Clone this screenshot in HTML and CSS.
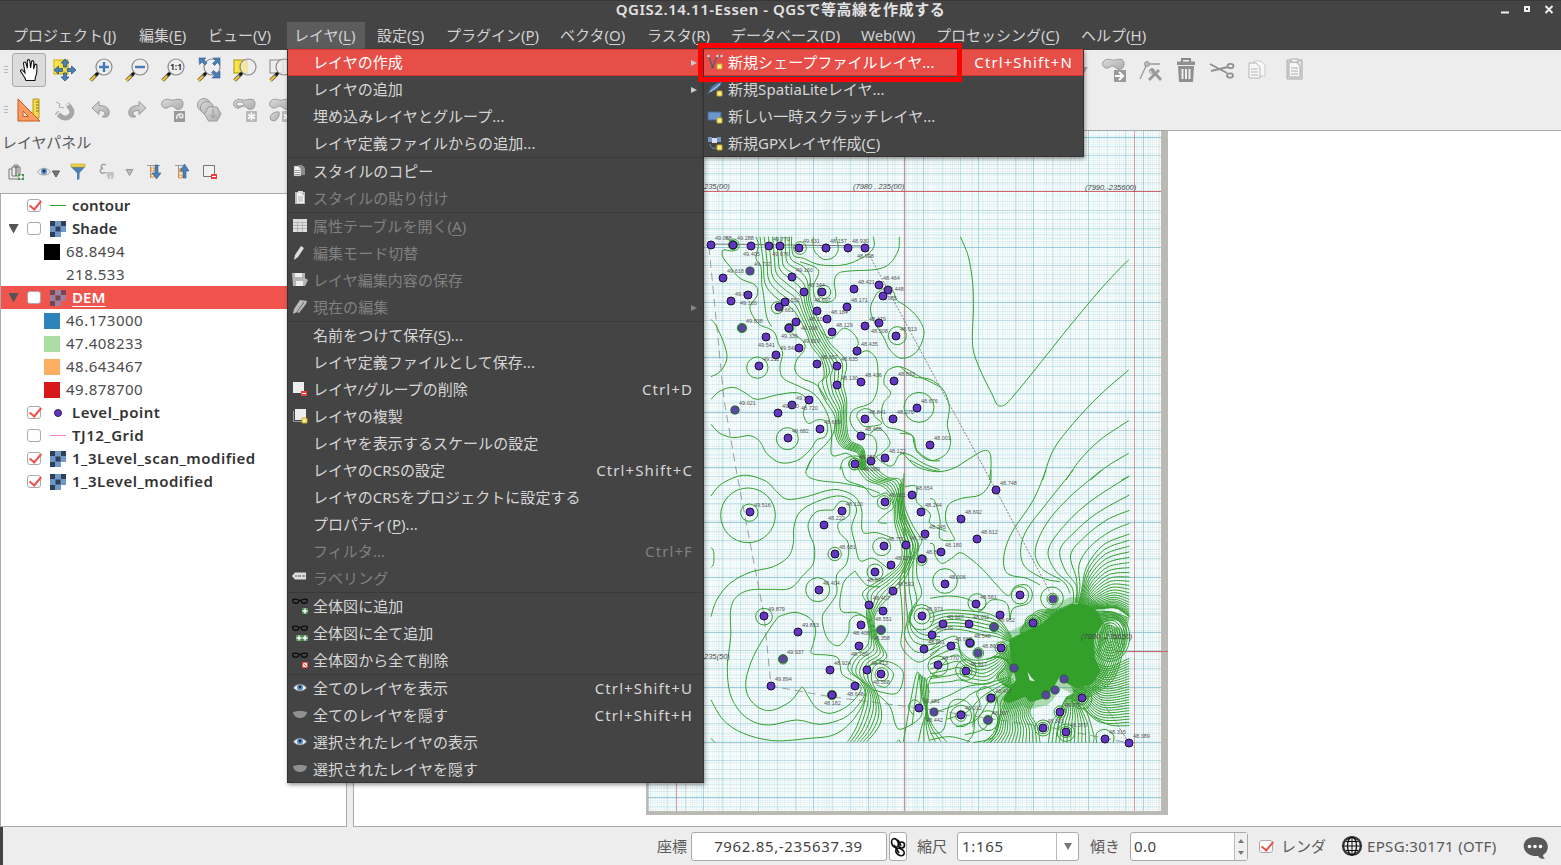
FILE: index.html
```html
<!DOCTYPE html>
<html lang="ja">
<head>
<meta charset="utf-8">
<title>QGIS2.14.11-Essen - QGSで等高線を作成する</title>
<link rel="stylesheet" href="styles.css">
</head>
<body>
<svg class="sprite" width="0" height="0">
  <defs>
    <linearGradient id="gy" x1="0" x2="1"><stop offset="0" stop-color="#fdea50"/><stop offset="1" stop-color="#e8cf30"/></linearGradient>
    <linearGradient id="gg" x1="0" x2="1" y2="1"><stop offset="0" stop-color="#ddd"/><stop offset="1" stop-color="#aaa"/></linearGradient>
  </defs>
  <symbol id="lens" viewBox="0 0 24 24"><path d="M1.5 22.5 8 16" stroke="#555" stroke-width="3.6"/><path d="M1.5 22.5 6 18" stroke="#fcc42e" stroke-width="2.2"/><path d="M7 17l2.5-2.5" stroke="#111" stroke-width="3"/><circle cx="15" cy="9" r="8" fill="#eee" fill-opacity=".75" stroke="#888" stroke-width="1.2"/></symbol>
  <symbol id="hand" viewBox="0 0 24 24"><path d="M9 22.500C8 19 5 16 3.500 13c0-1.800 2-1.600 3 .2l1.500 1.600L6.500 5.500c0-1.800 2-2 2.500-.2l1.400 5L10.300 3c.1-1.800 2.300-1.800 2.500 0l.8 7 .9-6.200c.3-1.700 2.300-1.400 2.300.3l-.2 6.900 1.200-4c.6-1.500 2.300-1 2.100.7C20 12 20 16 18.500 19l-.5 3.500z" fill="#fff" stroke="#111" stroke-width="1.100"/></symbol>
  <symbol id="pan" viewBox="0 0 24 24"><rect x="1" y="2" width="14" height="14" fill="url(#gy)" stroke="#c9a800"/><path d="M12 1l4 4h-2.500v4h-3V5H8zM12 23l4-4h-2.500v-4h-3v4H8zM1 12l4.500-4v2.500h4v3h-4V16zM23 12l-4.500-4v2.500h-4v3h4V16z" fill="#4c7fb5" stroke="#2e5a8c" stroke-width=".8"/></symbol>
  <symbol id="ruler" viewBox="0 0 24 24"><path d="M16 1h6v19h-6z" fill="#f3d94c" stroke="#b59b10"/><path d="M19 4h3M19 7h3M19 10h3M19 13h3" stroke="#8a7410"/><path d="M1 1v22h22zM6 13l5.500 5.500H6z" fill="#ff9a62" fill-rule="evenodd" stroke="#c75a20"/></symbol>
  <symbol id="magnet" viewBox="0 0 24 24"><path d="M3.500 14.500l4.500 4c6 5 15-3 9-9l-3-3.500" fill="none" stroke="#a6a6a6" stroke-width="5"/><path d="M3 18l4-4.500M12 9l4.500-3.500" stroke="#eee" stroke-width="1.500"/><path d="M3 4l4 2-1 3 5 1" stroke="#aaa" fill="none"/></symbol>
  <symbol id="undo" viewBox="0 0 24 24"><path d="M3 10l7-6.500v4c7 0 11 2.500 10 9-1 3-5 3-7 2 4-1 5-6-3-6v4z" fill="url(#gg)" stroke="#999"/></symbol>
  <symbol id="blob" viewBox="0 0 24 24"><path d="M2 3c4-4 7 0 11-1 4-1 9-2 9 4s-6 7-9 3c-3-3-6 2-9 1S-1 6 2 3z" fill="url(#gg)" stroke="#999"/></symbol>
  <symbol id="star" viewBox="0 0 24 24"><rect x="13" y="13" width="11" height="11" rx="1" fill="#b8b8b8"/><path d="M18.500 14.500v8M15 16.500l7 4M22 16.500l-7 4" stroke="#fff" stroke-width="1.500"/></symbol>
  <symbol id="eye" viewBox="0 0 16 16"><path d="M1.500 8c3-5 10-5 13 0-3 4-10 4-13 0z" fill="#e8eef4" stroke="#777" stroke-width=".6"/><circle cx="8" cy="7.500" r="3" fill="#5d8dc4"/><circle cx="8" cy="7" r="1.400" fill="#1b3556"/></symbol>
  <symbol id="lid" viewBox="0 0 16 16"><path d="M1 5c4-1.500 10-1.500 14 0-1 8-13 8-14 0z" fill="#909090"/></symbol>
  <symbol id="raster" viewBox="0 0 16 16"><path fill="#7199c8" d="M0 0h16v11H11v5H5V0z"/><path d="M0 5h5v6H0z" fill="#6d97c8"/><path fill="#2e3f58" d="M0 0h5v5H0zM11 0h5v5h-5zM5.500 5.500h5v5h-5zM0 11h5v5H0z"/></symbol>
  <symbol id="page" viewBox="0 0 16 16"><path d="M6 2h4l3 3v7H6z" fill="#8d8d8d"/><path d="M2 3h4.500L9 6v7H2z" fill="#f2f2f2" stroke="#777" stroke-width=".5"/><path d="M3 7.500h5M3 9.500h5M3 11.500h5" stroke="#999"/></symbol>
  <symbol id="clip" viewBox="0 0 16 16"><path d="M3 2h10v12H3z" fill="#bbb"/><path d="M5 3h4l3 3v7H5z" fill="#f5f5f5"/><path d="M6 1h5v2H6z" fill="#ddd"/><path d="M6 7h5M6 9h5M6 11h5" stroke="#999" stroke-width=".8"/></symbol>
  <symbol id="table" viewBox="0 0 16 16"><path d="M1 1h14v13H1z" fill="#ddd"/><path d="M1 4.500h14M1 7.500h14M1 10.500h14M5.500 4v10M10.500 4v10" stroke="#aaa" stroke-width=".8"/></symbol>
  <symbol id="pencil" viewBox="0 0 16 16"><path d="M2 15l1-5 6-9 3 2-6 9z" fill="#ddd"/></symbol>
  <symbol id="pencils" viewBox="0 0 16 16"><path d="M1 15l1-5 6-9 7 1-1 3-7 9-2-1z" fill="#bbb"/><path d="M5 13l7-10" stroke="#666"/></symbol>
  <symbol id="save" viewBox="0 0 16 16"><path d="M0 1h13v5l3 2-3 6H1z" fill="#b5b5b5"/><path d="M3 1h7v4H3zM4 9h7v5H4z" fill="#eee"/></symbol>
  <symbol id="sq" viewBox="0 0 16 16"><path d="M1 1h11v11H1z" fill="#eee"/></symbol>
  <symbol id="minus" viewBox="0 0 16 16"><rect x="9" y="10" width="6" height="5" fill="#ef3b3b"/><path d="M10 12.500h4" stroke="#fff"/></symbol>
  <symbol id="new" viewBox="0 0 16 16"><rect x="10" y="10" width="5" height="5" rx=".5" fill="#f7ec8e" stroke="#c9a820"/></symbol>
  <symbol id="tag" viewBox="0 0 16 16"><path d="M0 6l3-3.500h11v7H3z" fill="#ddd"/><path d="M3 6h2M6 6h3M10 6h3" stroke="#999" stroke-width="1.800"/></symbol>
  <symbol id="glasses" viewBox="0 0 16 16"><path d="M7 2.500C5 .8 2 .8.500 2 1 6.500 6.500 6.500 7 2.500c.7-.5 1.300-.5 2 0C11 .8 14 .8 15.500 2 15 6.500 9.500 6.500 9 2.500" fill="none" stroke="#0a0a0a" stroke-width="1.200"/></symbol>
  <symbol id="plus" viewBox="0 0 16 16"><rect x="10" y="10" width="6" height="6" fill="#4f8f52"/><path d="M13 10.500v5M10.500 13h5" stroke="#fff" stroke-width="1.500"/></symbol>
</svg>

<header class="titlebar"><span class="title">QGIS2.14.11-Essen - QGSで等高線を作成する</span>
  <svg class="winbtns" width="56" height="16"><path d="M5 11.500h8" stroke="#eee" stroke-width="2"/><rect x="29" y="6" width="4" height="4" fill="none" stroke="#eee" stroke-width="2"/><path d="M49.500 5l7 7M56.500 5l-7 7" stroke="#eee" stroke-width="2"/></svg>
</header>
<nav class="menubar">
  <span>プロジェクト(<u>J</u>)</span><span>編集(<u>E</u>)</span><span>ビュー(<u>V</u>)</span><span class="open">レイヤ(<u>L</u>)</span><span>設定(<u>S</u>)</span><span>プラグイン(<u>P</u>)</span><span>ベクタ(<u>O</u>)</span><span>ラスタ(<u>R</u>)</span><span>データベース(D)</span><span>Web(W)</span><span>プロセッシング(<u>C</u>)</span><span>ヘルプ(<u>H</u>)</span>
</nav>

<div class="toolbars">
  <div class="toolbar">
    <i class="grip"></i>
    <b class="tool on"><svg><use href="#hand"/></svg></b>
    <b class="tool"><svg><use href="#pan"/></svg></b>
    <b class="tool"><svg viewBox="0 0 24 24"><use href="#lens"/><path d="M15 4v10M10 9h10" stroke="#447bb8" stroke-width="2.400"/></svg></b>
    <b class="tool"><svg viewBox="0 0 24 24"><use href="#lens"/><path d="M10 9h10" stroke="#447bb8" stroke-width="2.400"/></svg></b>
    <b class="tool"><svg viewBox="0 0 24 24"><use href="#lens"/><text x="15" y="12" class="ratio">1:1</text></svg></b>
    <b class="tool"><svg viewBox="0 0 24 24"><use href="#lens"/><path d="M2 0h7L7 2l3 3-2 2-3-3-2.500 2.500zM23 0v7l-2.500-2.500L17.500 7.500l-2-2 3-3L16 0zM23 20h-8l2.500-2.500L14.500 14.500l2-2L20 15.500l3-2.500z" fill="#4c7fb5" stroke="#2e5a8c" stroke-width=".6"/></svg></b>
    <b class="tool"><svg viewBox="0 0 24 24"><rect x="1" y="2" width="13" height="13" fill="url(#gy)" stroke="#a98f10"/><use href="#lens"/><path d="M9 4.500c3-3 6-1 6 10-5 1-9-5-6-10z" fill="#f3e89a" opacity=".8"/></svg></b>
    <b class="tool"><svg viewBox="0 0 24 24"><rect x="1" y="2" width="13" height="13" fill="#eee" stroke="#888"/><use href="#lens"/></svg></b>
    <span class="spring"></span>
    <i class="drop"></i>
    <b class="tool"><svg viewBox="0 0 24 24"><use href="#blob"/><rect x="12" y="12" width="12" height="12" fill="#999"/><path d="M13 18h7M17 14l4 4-4 4" stroke="#fff" stroke-width="2" fill="none"/></svg></b>
    <b class="tool"><svg viewBox="0 0 24 24" fill="none" stroke="#999"><circle cx="9" cy="6" r="2.500" fill="#bbb"/><path d="M8 8 2 21M11 6h11" stroke-width="1.300"/><path d="M13 11l10 11M21 12l-10 10" stroke-width="2.800"/><circle cx="14" cy="13" r="2.500"/></svg></b>
    <b class="tool"><svg viewBox="0 0 24 24"><path d="M8 4V1h8v3" fill="none" stroke="#8a8a8a" stroke-width="2"/><path d="M3 3.500h18v3.500H3zM4 8h16l-1 16H5z" fill="#8f8f8f"/><path d="M8.500 11v10M12 11v10M15.500 11v10" stroke="#eee" stroke-width="2"/></svg></b>
    <b class="tool"><svg viewBox="0 0 24 24" fill="none" stroke="#909090" stroke-width="1.800"><path d="M0 6l17 9M1 13l17-4"/><ellipse cx="20.500" cy="8" rx="3" ry="2.200"/><ellipse cx="20" cy="17.500" rx="3" ry="2.200"/></svg></b>
    <b class="tool pale"><svg viewBox="0 0 24 24" fill="#f7f7f7" stroke="#b5b5b5"><path d="M8 3h7l4 4v11H8z" stroke="#ccc"/><path d="M3 5h7l4 4v11H3z"/><path d="M5 11h7M5 14h7M5 17h7"/></svg></b>
    <b class="tool pale"><svg viewBox="0 0 24 24" fill="#f7f7f7" stroke="#aaa"><path d="M5 2h15v19H5z" fill="#ddd"/><path d="M7 4h7l4 4v11H7z"/><path d="M9 10h7M9 13h7M9 16h7"/><path d="M9 1h7v3H9z"/></svg></b>
  </div>
  <div class="toolbar">
    <i class="grip"></i>
    <b class="tool"><svg><use href="#ruler"/></svg></b>
    <b class="tool"><svg><use href="#magnet"/></svg></b>
    <b class="tool"><svg><use href="#undo"/></svg></b>
    <b class="tool flip"><svg><use href="#undo"/></svg></b>
    <b class="tool"><svg viewBox="0 0 24 24"><use href="#blob"/><rect x="13" y="13" width="11" height="11" fill="#999"/><path d="M16 21c-2-5 6-7 6-3 0 3-5 2-3-1" stroke="#eee" stroke-width="1.500" fill="none"/></svg></b>
    <b class="tool"><svg viewBox="0 0 24 24" fill="url(#gg)" stroke="#999"><circle cx="7" cy="7" r="6.500"/><circle cx="10" cy="10" r="6.500"/><path d="M11.500 9h8.500l4 7-4 7h-8.500l-4-7z"/><path d="M16 11v8M13.500 17l2.500 3 2.500-3" fill="none"/></svg></b>
    <b class="tool"><svg viewBox="0 0 24 24"><use href="#blob"/><ellipse cx="7" cy="6" rx="4" ry="2.200" fill="#eee" stroke="#999"/><use href="#star"/></svg></b>
    <b class="tool"><svg viewBox="0 0 24 24"><use href="#blob"/><path d="M2 22c-3-4 3-9 8-8 1 5-3 11-8 8z" fill="url(#gg)" stroke="#999"/><use href="#star"/></svg></b>
  </div>
</div>

<main class="work">
  <aside class="panel">
    <h2>レイヤパネル</h2>
    <div class="ptools">
      <svg viewBox="0 0 16 16"><path d="M4 5H1v10h9M4 3h8v9H4zM6 3V1h4v9" fill="none" stroke="#777"/><path d="M8 2v10" stroke="#444"/><use href="#plus"/></svg>
      <svg class="w24" viewBox="0 0 24 16"><use href="#eye" width="16" height="16"/><path d="M16.500 7h7l-3.500 6z" fill="#777" stroke="#555"/></svg>
      <svg viewBox="0 0 16 16"><path d="M1 3h14L9.500 9v6L7 16V9z" fill="#4c7fb5"/><path d="M1 0h14v3H1z" fill="#ecd64e" stroke="#b9a020" stroke-width=".6"/></svg>
      <svg class="e" viewBox="0 0 16 16"><path d="M7 1C3-1 0 3 4 4.500-1 5 1 11 7 8.500" fill="none" stroke="#999" stroke-width="1.300"/><path d="M7 8h8v3l-1 4h-2v-3h-1v3H9l-1-3z" fill="#c4c4c4"/></svg>
      <svg class="w9" viewBox="0 0 9 16"><path d="M1 5.500h7L4.500 11.500z" fill="#bbb" stroke="#999"/></svg>
      <svg viewBox="0 0 16 16"><path d="M1 1.500h13M4.500 2v12M4 5h4M4 12h4" stroke="#999" fill="none"/><path d="M5 4h3v3H5zM5 10h3v3H5z" fill="#fff" stroke="#f28c1c"/><path d="M9 1h3v8h3l-4.500 6L6 9h3z" fill="#4c7fb5" stroke="#2e5a8c" stroke-width=".6"/></svg>
      <svg viewBox="0 0 16 16"><path d="M1 1.500h8M4.500 2v12M4 5h4M4 12h4" stroke="#999" fill="none"/><path d="M5 5h3v3H5zM5 11h3v3H5z" fill="#fff" stroke="#f28c1c"/><path d="M9 14h3V7h3l-4.500-7L6 7h3z" fill="#4c7fb5" stroke="#2e5a8c" stroke-width=".6"/></svg>
      <svg viewBox="0 0 16 16"><path d="M1.500 1.500h11v11h-11z" fill="#f2f2f2" stroke="#777"/><use href="#minus"/></svg>
    </div>
    <div class="tree">
      <div class="row"><i class="tw"></i><i class="cb ck"></i><i class="line green"></i><b>contour</b></div>
      <div class="row"><i class="tw tri"></i><i class="cb"></i><svg class="ri"><use href="#raster"/></svg><b>Shade</b></div>
      <div class="row leg"><i class="sw black"></i>68.8494</div>
      <div class="row leg"><i class="sw"></i>218.533</div>
      <div class="row sel"><i class="tw tri"></i><i class="cb"></i><svg class="ri"><use href="#raster"/></svg><b><u>DEM</u></b></div>
      <div class="row leg"><i class="sw blue"></i>46.173000</div>
      <div class="row leg"><i class="sw mint"></i>47.408233</div>
      <div class="row leg"><i class="sw orange"></i>48.643467</div>
      <div class="row leg"><i class="sw red"></i>49.878700</div>
      <div class="row wide"><i class="tw"></i><i class="cb ck"></i><i class="dot"></i><b>Level_point</b></div>
      <div class="row wide"><i class="tw"></i><i class="cb"></i><i class="line pink"></i><b>TJ12_Grid</b></div>
      <div class="row wide"><i class="tw"></i><i class="cb ck"></i><svg class="ri"><use href="#raster"/></svg><b>1_3Level_scan_modified</b></div>
      <div class="row wide"><i class="tw"></i><i class="cb ck"></i><svg class="ri"><use href="#raster"/></svg><b>1_3Level_modified</b></div>
    </div>
  </aside>
  <section class="canvas"><svg id="map" viewBox="354 131 1207 695" width="1207" height="695"></svg></section>
</main>

<footer class="status">
  <span class="lbl">座標</span><span class="field coord">7962.85,-235637.39</span>
  <span class="field tog"><svg viewBox="0 0 16 20"><g fill="none" stroke="#111" stroke-width="1.700"><ellipse cx="5" cy="6" rx="3.200" ry="4.500" transform="rotate(-20 5 6)"/><circle cx="11.500" cy="8" r="3"/><ellipse cx="10" cy="15" rx="4.500" ry="3.200" transform="rotate(30 10 15)"/><path d="M4 8l5 8M8 3l3 6"/></g></svg></span>
  <span class="lbl scale">縮尺</span><span class="field combo">1:165<i></i></span>
  <span class="lbl rot">傾き</span><span class="field spin">0.0<i></i></span>
  <i class="cb ck"></i><span class="lbl ren">レンダ</span>
  <svg class="globe" viewBox="0 0 22 22" fill="none" stroke="#111"><circle cx="11" cy="11" r="8.900" stroke-width="2.400" stroke="#333"/><path d="M2 11h18M5 6.500h12M5 15.500h12M11 2v18" stroke-width="1"/><ellipse cx="11" cy="11" rx="4.500" ry="9" stroke-width="1.300"/></svg>
  <span class="lbl epsg">EPSG:30171 (OTF)</span>
  <svg class="bubble" viewBox="0 0 26 24"><path d="M13 1c16 0 15 15 8 18 0 2 1 3 2 4-4 0-6-1-7-3C-2 21-3 1 13 1z" fill="#595959"/><circle cx="7.500" cy="10.500" r="1.800" fill="#fff"/><circle cx="13" cy="10.500" r="1.800" fill="#fff"/><circle cx="18.500" cy="10.500" r="1.800" fill="#fff"/></svg>
</footer>

<div class="menu main">
  <div class="mi hot"><i></i>レイヤの作成<em class="arr"></em></div>
  <div class="mi"><i></i>レイヤの追加<em class="arr"></em></div>
  <div class="mi"><i></i>埋め込みレイヤとグループ...</div>
  <div class="mi"><i></i>レイヤ定義ファイルからの追加...</div>
  <hr>
  <div class="mi"><svg><use href="#page"/></svg>スタイルのコピー</div>
  <div class="mi off"><svg><use href="#clip"/></svg>スタイルの貼り付け</div>
  <hr>
  <div class="mi off"><svg><use href="#table"/></svg>属性テーブルを開く(<u>A</u>)</div>
  <div class="mi off"><svg><use href="#pencil"/></svg>編集モード切替</div>
  <div class="mi off"><svg><use href="#save"/></svg>レイヤ編集内容の保存</div>
  <div class="mi off"><svg><use href="#pencils"/></svg>現在の編集<em class="arr"></em></div>
  <hr>
  <div class="mi"><i></i>名前をつけて保存(<u>S</u>)...</div>
  <div class="mi"><i></i>レイヤ定義ファイルとして保存...</div>
  <div class="mi"><svg viewBox="0 0 16 16"><use href="#sq"/><use href="#minus"/></svg>レイヤ/グループの削除<em>Ctrl+D</em></div>
  <div class="mi"><svg viewBox="0 0 16 16"><path d="M1.500 3v10.500h10" fill="none" stroke="#999"/><path d="M3 1h11v11H3z" fill="#eee"/><use href="#new"/></svg>レイヤの複製</div>
  <div class="mi"><i></i>レイヤを表示するスケールの設定</div>
  <div class="mi"><i></i>レイヤのCRSの設定<em>Ctrl+Shift+C</em></div>
  <div class="mi"><i></i>レイヤのCRSをプロジェクトに設定する</div>
  <div class="mi"><i></i>プロパティ(<u>P</u>)...</div>
  <div class="mi off"><i></i>フィルタ...<em>Ctrl+F</em></div>
  <div class="mi off"><svg><use href="#tag"/></svg>ラベリング</div>
  <hr>
  <div class="mi"><svg viewBox="0 0 16 16"><use href="#glasses"/><use href="#plus"/></svg>全体図に追加</div>
  <div class="mi"><svg viewBox="0 0 16 16"><use href="#glasses"/><use href="#plus"/><use href="#plus" x="-6"/></svg>全体図に全て追加</div>
  <div class="mi"><svg viewBox="0 0 16 16"><use href="#glasses"/><rect x="10" y="10" width="6" height="6" fill="#e44"/><circle cx="13" cy="13" r="1.800" fill="none" stroke="#fff"/><path d="M11.500 14.500l3-3" stroke="#fff"/></svg>全体図から全て削除</div>
  <hr>
  <div class="mi"><svg><use href="#eye"/></svg>全てのレイヤを表示<em>Ctrl+Shift+U</em></div>
  <div class="mi"><svg><use href="#lid"/></svg>全てのレイヤを隠す<em>Ctrl+Shift+H</em></div>
  <div class="mi"><svg><use href="#eye"/></svg>選択されたレイヤの表示</div>
  <div class="mi"><svg><use href="#lid"/></svg>選択されたレイヤを隠す</div>
</div>
<div class="menu sub">
  <div class="mi hot"><svg viewBox="0 0 16 16"><path d="M1.500 2l4 11 5-11h4" fill="none" stroke="#556070" stroke-width="1.300"/><circle cx="1.500" cy="2" r="1.200" fill="#dde"/><circle cx="5.500" cy="13" r="1.300" fill="#557"/><circle cx="10.500" cy="2" r="1.200" fill="#dde"/><circle cx="14.500" cy="2" r="1.200" fill="#dde"/><use href="#new"/></svg>新規シェープファイルレイヤ...<em>Ctrl+Shift+N</em></div>
  <div class="mi"><svg viewBox="0 0 16 16"><path d="M0 14C4 5 8 2 15 1 13 7 8 10 3 11z" fill="#4c7fb5"/><path d="M3 11L13 3" stroke="#dde"/><use href="#new"/></svg>新規SpatiaLiteレイヤ...</div>
  <div class="mi"><svg viewBox="0 0 16 16"><path d="M1 4h13v8H1z" fill="#6d97c8" stroke="#41699a"/><use href="#new"/></svg>新しい一時スクラッチレイヤ...</div>
  <div class="mi"><svg viewBox="0 0 16 16"><path d="M1 2h4v5H1zM10 2h4v5h-4z" fill="#6d97c8"/><path d="M5 3h5v5H5z" fill="#dde"/><path d="M3 9c1 4 3 5 6 4" fill="none" stroke="#6d97c8"/><use href="#new"/></svg>新規GPXレイヤ作成(<u>C</u>)</div>
</div>
<div class="marker"></div>
<script src="map.js"></script>
</body>
</html>
```
FILE: styles.css
```css
* { box-sizing: border-box; }
body { margin: 0; width: 1561px; height: 865px; overflow: hidden; position: relative; display: flex; flex-direction: column; background: #ededed; color: #4c4c4c; font: 400 15px/23px "Noto Sans", "Noto Sans CJK JP", sans-serif; }
i, em { font-style: normal; }
b { font-weight: normal; }
u { text-decoration: underline; text-underline-offset: 3px; text-decoration-thickness: 1px; }
.sprite { position: absolute; }

.titlebar { height: 22px; background: #444; border-top: 1px solid #383838; display: flex; position: relative; justify-content: center; color: #e2e2e2; font-weight: 600; font-size: 15px; line-height: 17px; white-space: pre; }
.title { letter-spacing: .53px; }
.winbtns { position: absolute; right: 9px; top: 0; overflow: visible; }
.menubar { height: 28px; background: #444; padding-left: 5px; display: grid; grid-template-columns: 126px 69px 87px 82px 69px 114px 87px 84px 130px 75px 145px 90px; color: #d2d2d2; line-height: 27px; white-space: nowrap; }
.menubar span { padding-left: 8px; }
.menubar .open { background: #5c5c5c; width: 78px; height: 27px; padding-left: 7px; }

.toolbars { height: 80px; }
.toolbar { height: 40px; display: flex; align-items: center; padding-left: 4px; }
.grip { width: 4px; height: 8px; margin-right: 3px; background: repeating-linear-gradient(#bbb 0 1px, transparent 1px 3px); }
.tool { width: 36px; height: 34px; display: flex; align-items: center; justify-content: center; flex: none; }
.tool svg { width: 24px; height: 24px; overflow: visible; }
.tool.on { width: 34px; margin: 0 1px; border: 1px solid #aaa; border-radius: 3px; background: #dcdcdc; }
.flip { transform: scaleX(-1); }
.spring { width: 781px; flex: none; }
.drop { border: 4px solid transparent; border-top: 6px solid #aaa; border-bottom: 0; margin-right: 8px; }
.ratio { font: 700 8.500px "Noto Sans", sans-serif; text-anchor: middle; fill: #333; }

.work { height: 697px; display: flex; }
.panel { width: 347px; border-right: 1px solid #aaa; display: flex; flex-direction: column; }
h2 { margin: 0; height: 25px; padding-left: 2px; font-size: 15px; font-weight: 400; line-height: 25px; color: #5a5a5a; }
.ptools { height: 38px; display: flex; align-items: center; padding: 0 0 5px 8px; }
.ptools svg { width: 16px; height: 16px; margin-right: 12px; overflow: visible; }
.ptools .w24 { width: 24px; margin-right: 10px; }
.ptools .e { margin: 0 10px 0 1px; }
.ptools .w9 { width: 9px; margin: 0 12px 0 0; }
.tree { flex: 1; border: 1px solid #aaa; border-right: 0; background: #fff; }
.row { height: 23px; display: flex; align-items: center; letter-spacing: .5px; }
.row b { font-weight: 600; letter-spacing: .1px; color: #333; }
.row.wide b { letter-spacing: .5px; }
.tw { width: 26px; height: 10px; }
.tri { background: linear-gradient(#555, #555) no-repeat 8px 0 / 10px 10px; clip-path: polygon(7px 0, 18px 0, 12.500px 10px); }
.cb { width: 14px; height: 13px; border: 1px solid #aaa; border-radius: 3px; background: #fff; margin-right: 9px; position: relative; }
.ck::after { content: ""; position: absolute; left: 4px; top: -2px; width: 5px; height: 10px; border: solid #ef4f48; border-width: 0 2px 2px 0; transform: rotate(40deg); }
.line { width: 16px; height: 1px; margin-right: 6px; }
.green { background: #33a02c; }
.pink { background: #ee82d6; }
.ri { width: 16px; height: 16px; margin-right: 6px; }
.dot { width: 8px; height: 8px; margin: 0 10px 0 4px; border-radius: 50%; background: #6236c0; border: 1px solid #332255; }
.leg { padding-left: 43px; }
.sw { width: 16px; height: 16px; margin-right: 6px; }
.black { background: #000; } .blue { background: #2b83ba; } .mint { background: #abdda4; } .orange { background: #fdae61; } .red { background: #d7191c; }
.sel { background: #f0544c; }
.row.sel b { color: #fff; }
.sel .ri { opacity: .62; }
.canvas { margin-left: 6px; width: 1208px; height: 697px; background: #fff; border: 1px solid #aaa; border-right: 0; }
.canvas svg { display: block; }
.pt { fill: #6236c0; stroke: #1a1033; stroke-width: 1; }
.ptg { fill: #5b45a2; stroke: #2f5f40; stroke-width: 1.200; }
.ct path, .ct circle, .ct ellipse { fill: none; stroke: #33a02c; vector-effect: non-scaling-stroke; }
.ct .core { fill: #33a02c; stroke: none; }
.ct .fringe { fill: #33a02c; stroke: #33a02c; stroke-width: 14px; stroke-linejoin: round; opacity: .35; }
.hand { font: 5.500px "Liberation Sans", sans-serif; fill: #555; }
.hand2 { font: italic 7.500px "Liberation Sans", sans-serif; fill: #444; }

.status { height: 38px; display: flex; align-items: center; color: #5a5a5a; border-left: 3px solid #444; padding-left: 654px; }
.lbl { white-space: nowrap; width: 34px; }
.field { background: #fff; border: 1px solid #aaa; border-radius: 3px; height: 29px; color: #444; line-height: 27px; position: relative; white-space: nowrap; }
.coord { width: 196px; text-align: center; letter-spacing: .65px; padding-right: 1px; }
.tog { width: 18px; margin: 0 10px 0 2px; }
.tog svg { width: 16px; height: 20px; margin: 4px 0; display: block; }
.scale { width: 40px; }
.combo { width: 122px; padding-left: 4px; letter-spacing: .7px; }
.combo i { position: absolute; right: 0; top: 0; width: 22px; height: 27px; border-left: 1px solid #bbb; }
.combo i::after { content: ""; position: absolute; left: 7px; top: 10px; border: 4px solid transparent; border-top: 7px solid #777; border-bottom: 0; }
.rot { padding-left: 11px; width: 52px; margin-right: -1px; }
.spin { width: 118px; padding-left: 3px; letter-spacing: .4px; }
.spin i { position: absolute; right: 0; top: 0; width: 13px; height: 27px; background: #f0f0f0; border-left: 1px solid #bbb; }
.spin i::before, .spin i::after { content: ""; position: absolute; left: 3px; top: 6px; border: 3px solid transparent; border-bottom: 4px solid #777; border-top: 0; }
.spin i::after { top: 18px; border-top: 4px solid #777; border-bottom: 0; }
.status > .cb { margin: 0 8px 0 11px; }
.ren { width: 60px; }
.globe { width: 22px; height: 22px; margin-right: 4px; }
.epsg { width: 156px; letter-spacing: .35px; }
.bubble { width: 26px; height: 24px; margin-top: 3px; margin-left: -1px; }

.menu { position: absolute; background: #444; border: 1px solid #333; box-shadow: 1px 2px 4px rgba(0,0,0,.4); color: #d6d6d6; }
.main { left: 287px; top: 49px; width: 417px; height: 734px; border-top: 0; }
.sub { left: 703px; top: 49px; width: 381px; height: 108px; border-top: 0; }
.sub .mi { padding-left: 3px; }
.menu hr { margin: 0; border: 0; height: 1px; background: #393939; }
.mi { height: 27px; display: flex; align-items: center; padding: 0 11px 0 4px; line-height: 27px; white-space: pre; letter-spacing: .05px; }
.mi svg, .mi > i { width: 16px; height: 16px; margin: -2px 5px 0 0; flex: none; overflow: visible; }
.mi em { margin-left: auto; margin-right: -1px; letter-spacing: 1.100px; }
.mi .arr { border: 3px solid transparent; border-left: 6px solid #ccc; border-right: 0; margin-right: -5px; }
.menu .off { color: #808080; }
.off .arr { border-left-color: #858585; }
.menu .hot { background: #e84e48; color: #fff; box-shadow: inset 0 1px #d8352f, inset 0 -1px #d8352f; }
.marker { position: absolute; left: 698px; top: 43px; width: 264px; height: 39px; border: 5px solid #f00; }
```
FILE: map.js
```js
const map = document.getElementById('map');
let out = '';
let seed = 7;
const rnd = () => (seed = (seed * 16807) % 2147483647) / 2147483647;

// Scanned sheet of millimetre paper
out += '<rect x="646" y="131" width="522" height="684" fill="#bab9b4"/><rect x="648" y="131" width="513" height="680" fill="#f9ffff"/>';
const vline = (x, c, o) => out += `<rect x="${x}" y="131" width="1" height="680" fill="${c}" opacity="${o}"/>`;
const hline = (y, c, o) => out += `<rect x="648" y="${y}" width="513" height="1" fill="${c}" opacity="${o}"/>`;
const tints = ['#a5ecf4', '#b5c2c0', '#a0dcee', '#e2c9c2'];
for (let k = 0; k < 280; k++) vline(Math.round(648 + k * 1.833), tints[k % 4], (.04 + rnd() * .26).toFixed(2));
for (let k = 0; k < 371; k++) hline(Math.round(131 + k * 1.833), tints[(k + 1) % 4], (.04 + rnd() * .26).toFixed(2));
for (let k = 0; k < 28; k++) vline(Math.round(648.300 + k * 18.330), '#7fbcd0', k % 3 ? .3 : .6);
for (let k = 0; k < 37; k++) if (k !== 3) hline(Math.round(136.700 + k * 18.330), '#7fbcd4', k % 3 ? .35 : .7);
for (let k = 0; k < 74; k++) if (k !== 6) hline(Math.round(137 + k * 9.165), '#8bb', .18);
vline(904, '#c8606c', .7); vline(676, '#c8606c', .6); vline(1134, '#c8606c', .6);
hline(191, '#cc4858', .85);
out += '<rect x="1116" y="651" width="52" height="1" fill="#c66"/>';
out += '<path d="M709 247 724 400 738 480 764 615 771 686 832 697 919 708 1053 728 1129 743" fill="none" stroke="#888" stroke-width=".8" stroke-dasharray="8 5"/>';
out += '<path d="M711 244 865 246" stroke="#555" stroke-width=".8"/><path d="M865 247 940 387 996 490 1053 598M1095 690 1129 743" fill="none" stroke="#666" stroke-width=".8" stroke-dasharray="2 1.500"/>';

const smooth = p => {
  let d = `M${p[0][0]} ${p[0][1]}`;
  for (let i = 0; i < p.length - 1; i++) {
    const a = p[i - 1] || p[i], b = p[i], c = p[i + 1], e = p[i + 2] || c;
    const f = v => v.toFixed(1);
    d += `C${f(b[0] + (c[0] - a[0]) / 6)} ${f(b[1] + (c[1] - a[1]) / 6)} ${f(c[0] - (e[0] - b[0]) / 6)} ${f(c[1] - (e[1] - b[1]) / 6)} ${c[0].toFixed(1)} ${c[1].toFixed(1)}`;
  }
  return `<path d="${d}"/>`;
};
const pts = s => s.trim().split(/\s+/).map(q => q.split(',').map(Number));
const bundle = (a, b, n, pow = 1) => {
  const A = pts(a), B = pts(b);
  for (let k = 0; k < n; k++) {
    const t = 1 - Math.pow(1 - k / (n - 1), pow);
    out += smooth(A.map((p, i) => [p[0] + (B[i][0] - p[0]) * t, p[1] + (B[i][1] - p[1]) * t]));
  }
};
const lines = a => a.forEach(s => out += smooth(pts(s)));
const rings = a => a.forEach(([x, y, r]) => out += `<circle cx="${x}" cy="${y}" r="${r}"/>`);
const tile = (x, y, fn) => { out += `<g class="ct" transform="translate(${x} ${y}) scale(.33333)">`; fn(); out += '</g>'; };

// North-west
tile(700, 170, () => {
  lines([
    '75,200 90,212 100,207 115,215 115,236 95,243 70,240 68,260 90,290 120,325 165,345 172,375 150,410 160,440 180,465 205,475 225,490 235,520 248,550 240,590 250,625 300,650 340,670 365,700 385,740 395,790 396,855 440,850 470,870',
    '168,200 175,225 168,265 183,290 185,340 190,370 200,440 215,470',
    '340,200 342,240 365,265 385,268 405,258 415,235 408,200',
    '520,200 522,230 500,255 450,280 400,287 350,282 310,265 282,258 275,230 275,200',
    '598,200 595,240 570,280 530,298 450,303 415,310 403,335 407,380 385,397 350,390 340,350 355,300 300,275',
    '530,370 512,410 520,450 550,500 570,540 605,565 650,545 672,490 655,445 620,410 590,390 580,365 555,355 530,370',
    '33,448 50,470 75,530 80,570 60,605 33,620',
    '33,688 60,663 100,652 135,668 170,688 230,675 290,668 320,690 310,730 325,760 350,750 375,752 383,775 375,800 350,810 330,840 290,872 240,878 200,850 180,815 150,797 100,803 60,790 33,763',
    '275,490 300,505 315,525 310,545 290,570 285,600 305,625 350,645 380,690',
    '360,480 380,500 400,503 430,475 460,490 475,520 460,545 470,555 500,542 525,560 533,590 533,650 520,690 500,705 460,720 450,750 470,785 520,800 530,840 515,870',
    '470,740 475,725 495,716 515,722 525,740 545,760 520,768 490,768 470,740',
    '720,650 660,620 620,597 590,590 560,605 552,640 572,670 550,700 545,740 560,770 600,780 640,800 650,840 690,870 720,872',
    '320,900 340,860 380,820 400,790 405,760',
    '420,900 430,870 460,858 490,862',
    '510,790 540,775 570,818 545,850 530,862 560,885 580,885 600,853 630,855 670,880 720,900'
  ]);
  bundle('180,200 190,280 195,340 225,380 275,415 300,450 320,490 335,530 365,570 372,620 355,645 375,690 405,740 405,790 425,830 475,852 480,900',
         '268,200 268,240 275,270 310,290 330,320 330,380 345,430 370,480 390,520 430,560 440,590 430,640 440,690 440,760 450,810 490,835 498,900', 8);
  rings([[300,234,19],[378,234,12],[126,474,14],[172,593,32],[262,806,33],[105,720,12],[372,366,20],[592,497,27],[657,712,45],[99,225,14],[150,303,10],[232,413,18],[268,474,14],[464,882,18],[471,543,12],[564,360,10]]);
});

// North-east
tile(900, 150, () => lines([
  '181,260 205,320 218,400 220,480 217,560 222,610 245,670 275,730 290,762 305,768 325,755 380,690 440,615 512,525 600,420 660,355 686,330',
  '686,660 600,735 520,820 460,900 428,990',
  '686,812 600,870 540,930 498,990',
  '686,910 620,950 572,990',
  '686,980 665,990',
  '0,650 40,680 90,688 130,720 148,770 142,825 152,870 140,910 95,932 55,910 42,880 35,855 0,850',
  '0,910 10,912 50,950 110,965 160,955 210,925 250,902 270,910 273,950 268,990'
]));

// South-west
tile(700, 460, () => {
  lines([
    '33,108 60,75 110,50 150,47 200,65 230,95 262,118 320,110 380,92 420,90 465,110 485,150 488,215 530,218 580,235',
    '33,470 50,420 90,370 150,337 220,320 265,290 280,250 282,200 300,155 350,125 410,108 450,118 470,150 455,200 465,250 480,302 520,295 570,330',
    '33,835 45,848',
    '33,720 70,780 130,820 220,842 330,835 400,825 450,790 485,740 500,700',
    '33,262 41,275 41,310 33,322',
    '400,150 350,155 325,190 330,225 343,260 340,310 310,345 270,385 210,388 150,390 110,410 92,450 92,530 82,620 90,700 120,755 160,785 210,795 290,780 360,793 430,775 470,740 495,700 480,665',
    '235,470 285,457 330,475 347,510 340,550 335,580 380,585 415,595 425,640 450,658 480,675 478,700 440,740 390,760 350,745 325,710 308,682 295,695 270,725 220,750 180,745 145,710 138,660 160,590 200,520 235,470',
    '400,150 420,125 445,130 447,165 415,190 420,220 445,250 440,310 410,345 410,400 385,440 367,470 375,520 395,550 420,555 445,520 450,480 480,465 510,490 515,540',
    '332,0 318,40 350,60 430,70 500,85 540,100',
    '465,333 430,370 422,450 470,458 510,480', '465,333 500,375 540,380',
    '560,190 535,185 560,160 580,140 560,100 520,110 490,80 440,60 425,20',
    '630,0 680,25 720,35', '615,80 650,80 650,125 690,160 690,190 740,215',
    '530,700 570,740 585,790 600,808 640,790 665,765 660,730 640,720 625,740 640,765',
    '520,690 590,700 610,640 580,610 530,600', '590,845 597,840 602,848',
    '500,620 540,610 580,640 560,680 530,675'
  ]);
  bundle('470,20 500,60 550,80 580,120 583,180 592,220 605,260 600,310 555,350 490,395 500,430 500,470 508,520 500,560 460,590 445,630 490,670 495,720 470,800 443,845',
         '500,0 560,50 600,60 608,110 614,170 640,220 655,260 632,320 610,365 580,400 540,440 522,480 535,540 560,590 522,620 515,660 535,710 545,770 530,810 500,845', 7);
  bundle('590,100 600,170 615,240 620,300 600,360 605,430 608,500 605,560 650,605 690,590 720,565',
         '612,40 612,130 640,200 665,240 655,270 650,340 665,400 640,440 630,480 660,520 720,530', 5);
  bundle('610,845 650,640 665,710 678,755 665,800 655,845', '740,600 690,660 685,710 682,755 700,800 740,845', 6);
  rings([[144,166,82],[148,158,26],[404,282,20],[353,389,36],[192,470,25],[249,598,14],[396,705,14],[545,260,27],[525,336,24],[552,127,20],[666,468,24],[664,472,38],[665,300,16],[545,643,20],[464,12,17],[543,510,14]]);
});

// South-east, where the survey points bunch together
tile(930, 470, () => {
  const core = 'M238 508 290 482 335 462 372 428 425 402 470 404 505 425 520 460 492 500 494 560 512 605 485 642 440 655 410 640 388 622 372 650 345 685 300 696 285 680 262 690 235 700 218 690 235 660 258 630 242 570z';
  out += `<path class="fringe" d="${core}"/><path class="core" d="${core}"/>`;
  lines([
    '183,0 180,40 150,75 95,85 55,105 47,150 65,190 72,210 30,205 30,150 15,95 0,85',
    '0,220 12,225 15,255 35,280 65,265 90,248 120,265 160,300 200,345 235,377 255,350 290,345 307,370 295,400 250,415 240,450',
    '348,0 310,90 250,180 225,240 222,290 240,315 290,325 330,345',
    '430,0 350,100 290,180 272,240 285,290 340,325 390,335',
    '515,0 420,80 350,160 316,240 335,295 400,335 420,370',
    '598,18 480,95 400,170 355,240 375,300 425,350 430,400',
    '598,75 500,130 430,190 390,240 405,300 440,350 435,400',
    '598,121 530,150 465,200 422,255 440,330 440,400',
    '598,160 540,185 480,230 447,285 450,350 440,400',
    '0,385 60,378 120,390 150,420 185,390 230,400 240,450',
    '380,800 405,690 460,710 490,790 490,818', '598,767 540,765 490,740 440,700',
    '500,818 500,790 525,778 550,795 550,818',
    '110,818 130,790 135,740 150,700 140,670 165,650 195,670 205,720 200,780 180,818',
    '0,810 60,800 120,815', '0,790 40,780 60,700 100,690 130,720 128,770'
  ]);
  bundle('598,192 520,225 470,290 455,360 440,420', '598,440 560,415 520,415 480,420 440,440', 26, 1.9);
  bundle('0,430 50,420 110,422 170,430 210,450 245,500', '0,510 40,480 100,480 160,495 200,500 240,515', 7);
  bundle('0,540 40,510 80,500 90,540 130,570 190,560 240,520', '0,640 60,635 90,630 130,640 180,640 210,610 245,560', 8);
  bundle('0,700 60,675 110,650 170,640 240,620', '130,818 190,800 210,740 215,690 260,640', 6);
  bundle('160,818 190,790 205,750 225,690 250,640', '330,818 322,770 300,730 310,700 330,670', 17);
  bundle('355,818 365,760 390,720 410,680', '478,818 475,770 460,730 430,670', 12);
  bundle('470,560 530,590 598,565', '430,660 500,752 598,757', 25, .95);
  bundle('475,430 540,425 598,445', '500,460 560,450 590,480', 8);
  bundle('270,480 300,440 330,420 375,420 430,400', '270,500 310,480 340,460 385,440 430,440', 9);
  bundle('170,570 200,560 235,580 200,620 230,650', '245,540 245,570 250,600 240,630 260,670', 9);
  bundle('420,640 460,600 500,540 520,460', '440,700 540,640 575,560 590,480', 15);
  for (let k = 0; k < 8; k++) out += `<ellipse cx="540" cy="500" rx="${10 + k * 7}" ry="${18 + k * 8}"/>`;
  rings([[93,738,32],[93,738,16],[45,333,37],[270,376,26],[366,385,34],[368,387,17],[309,459,24],[309,459,16],[141,398,27],[108,600,31],[108,603,18],[24,588,30],[145,549,16],[192,471,14],[182,685,14],[174,752,30],[174,750,14],[339,774,24],[339,774,17],[408,788,26],[408,786,17],[390,726,18],[456,687,30],[456,685,18],[213,534,18],[120,519,14],[252,594,13]]);
  out += '<path style="fill:#e9f8ea;stroke:none" d="M293 605l6 26 16 3-12-12zM358 708l34-18-12 18z"/>';
});

// Survey points, x,y in sheet pixels; * marks one overdrawn by a contour
const P = '711,245 733,245 751,246 769,246 780,246 799,248 826,248 848,248 865,248 723,278 750,271* 792,277 731,301 748,295 804,292 822,292 854,289 879,285 888,290 883,296 779,307 785,302 817,311 847,307 827,319 742,328* 789,328 796,322 766,337 832,332 865,326 879,323 896,336 776,355 799,348 857,351 759,366 817,364 837,366 861,382 837,385 894,381 735,410* 792,405 809,400 778,413 820,429 788,438 865,419 893,419 917,408 861,436 930,445 885,458 871,461 855,464 750,512 842,511 824,525 885,502 912,495 921,512 925,534 906,545 884,546 835,554 922,559 941,552 891,565 875,572 819,590 893,591 869,605 883,611 764,616 798,632 861,625 881,630* 922,616 859,646 783,659* 932,635 924,649 830,670 867,670 881,674 855,686 771,686 832,695 919,708 934,712* 938,665 996,490 961,519 977,539 945,584 1020,595 1053,599* 976,604 1000,615 1033,623 943,624 969,624 994,627* 951,646 970,643 978,653* 1001,648 966,671 1014,668* 1064,679* 1055,690* 1046,695* 1082,698 991,698 1060,712 1043,728 1066,732 1105,739 1129,743 961,715 988,720*'.split(' ');

// Each spot height takes the first free place round its point
const placed = [];
const free = (x, y) => placed.every(([a, b]) => Math.abs(a - x) > 18 || Math.abs(b - y) > 7);
P.forEach(s => {
  const [x, y] = s.replace('*', '').split(',').map(Number);
  const v = ((x < 800 ? 49 : 48) + rnd()).toFixed(3);
  if (x < 1000 || y > 700) {
    const spot = [[4, -5], [-8, 10], [5, 8], [-18, -5], [6, 2], [-23, 2]].map(o => [x + o[0], y + o[1]]).find(q => free(...q));
    if (spot) {
      placed.push(spot);
      out += `<text class="hand" x="${spot[0]}" y="${spot[1]}">${v}</text>`;
    }
  }
  out += `<circle class="${s.includes('*') ? 'ptg' : 'pt'}" cx="${x}" cy="${y}" r="4"/>`;
});
out += '<text class="hand2" x="704" y="189">235(00)</text><text class="hand2" x="853" y="189">(7980 , 235(00)</text><text class="hand2" x="1085" y="190">(7990,-235600)</text><text class="hand2" x="704" y="659">235(50)</text><text class="hand2" x="1081" y="639">(7990,-235650)</text>';
map.innerHTML = out;
```
